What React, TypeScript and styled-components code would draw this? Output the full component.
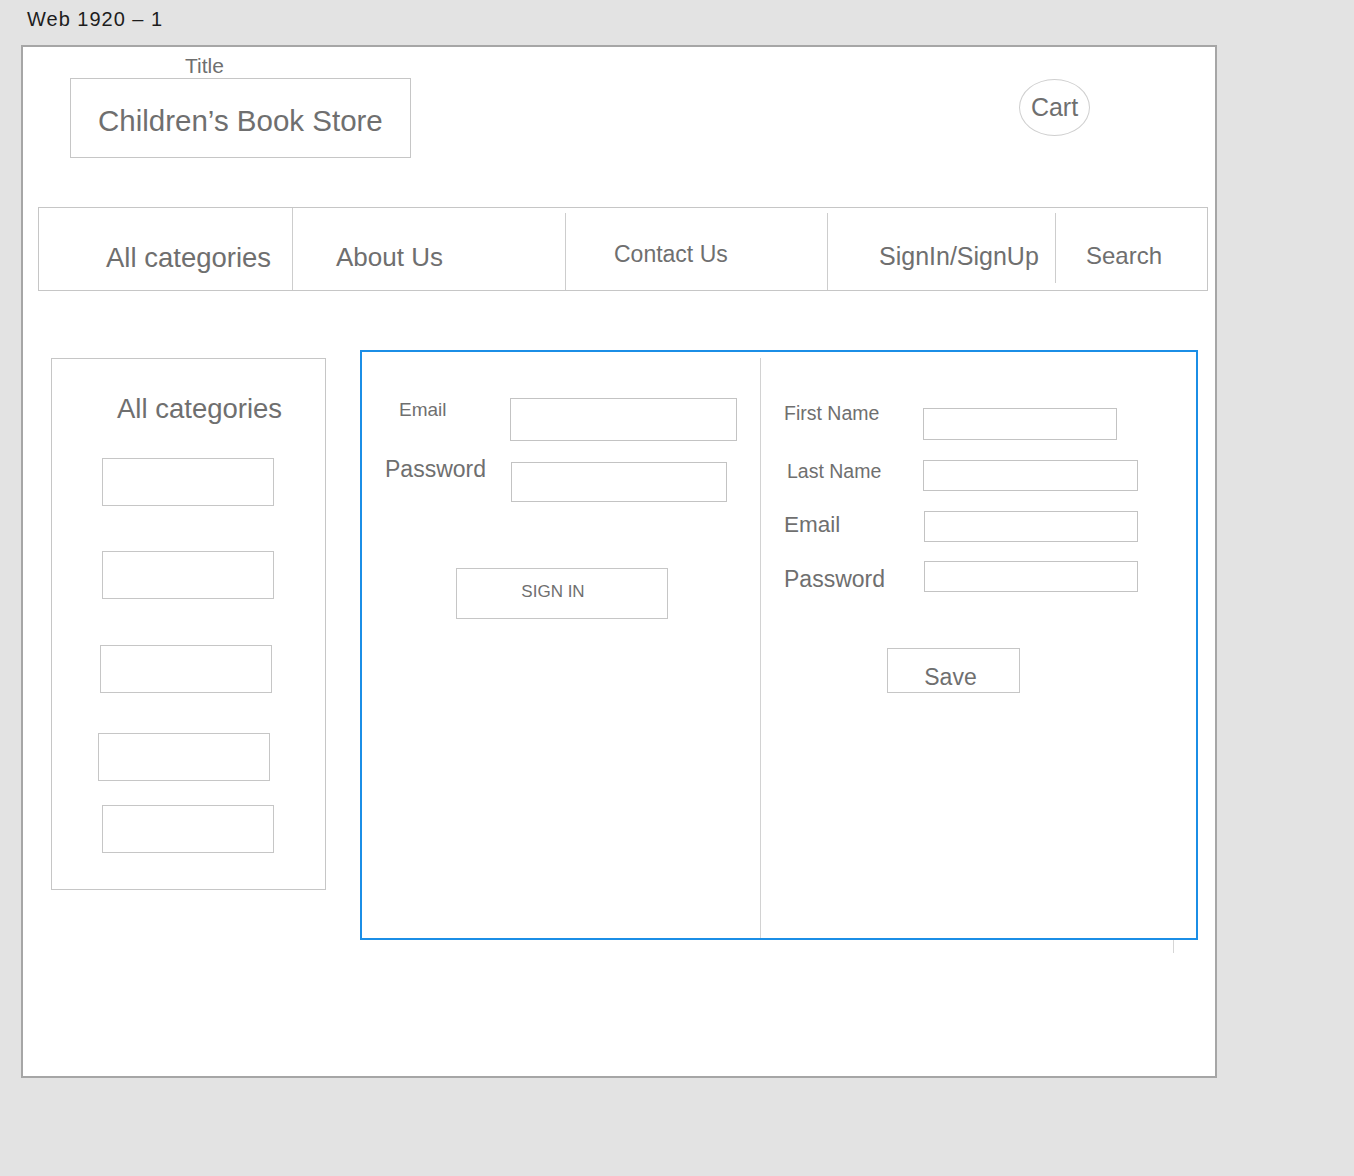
import React from 'react'
import styled, { createGlobalStyle } from 'styled-components'

const TEXT = '#6f6f6f'
const LINE = '#c6c6c6'
const BLUE = '#1b8ee6'

const GlobalStyle = createGlobalStyle`
  body {
    margin: 0;
    background: #e3e3e3;
    font-family: 'Liberation Sans', Arial, sans-serif;
  }
`

const Page = styled.div`
  width: 1354px;
  min-height: 1176px;
`

const Caption = styled.div`
  box-sizing: border-box;
  height: 45px;
  padding: 9px 0 0 27px;
  font-size: 20px;
  line-height: 1;
  letter-spacing: 1px;
  color: #1d1d1d;
`

const Artboard = styled.div`
  box-sizing: border-box;
  margin-left: 21px;
  width: 1196px;
  height: 1033px;
  border: 2px solid #a6a6a6;
  background: #fff;
`

const Header = styled.header`
  display: flex;
  align-items: flex-start;
  padding: 8px 0 0 47px;
`

const TitleGroup = styled.div`
  display: flex;
  flex-direction: column;
  align-items: flex-start;
`

const TitleLabel = styled.span`
  margin: 0 0 2px 115px;
  font-size: 21px;
  line-height: 1;
  color: ${TEXT};
`

const TitleBox = styled.div`
  box-sizing: border-box;
  width: 341px;
  height: 80px;
  padding: 27px 0 0 27px;
  border: 1px solid ${LINE};
`

const TitleText = styled.h1`
  margin: 0;
  font-size: 29.5px;
  font-weight: 400;
  line-height: 1;
  color: ${TEXT};
  white-space: nowrap;
`

const CartBubble = styled.button`
  box-sizing: border-box;
  width: 71px;
  height: 57px;
  margin: 24px 0 0 608px;
  padding: 0;
  border: 1px solid #cfcfcf;
  border-radius: 50%;
  background: #fff;
  display: flex;
  align-items: center;
  justify-content: center;
  font-family: inherit;
  font-size: 25px;
  line-height: 1;
  color: ${TEXT};
  cursor: pointer;
`

const NavBar = styled.nav`
  display: flex;
  box-sizing: border-box;
  width: 1170px;
  height: 84px;
  margin: 49px 0 0 15px;
  border: 1px solid ${LINE};
`

const NavCell = styled.a<{ $w?: number; $pl: number; $pt: number; $size: number }>`
  flex: ${({ $w }) => ($w ? `0 0 ${$w}px` : '1 1 auto')};
  box-sizing: border-box;
  padding: ${({ $pt, $pl }) => `${$pt}px 0 0 ${$pl}px`};
  font-size: ${({ $size }) => $size}px;
  line-height: 1;
  color: ${TEXT};
  white-space: nowrap;
  cursor: pointer;
`

const NavDivider = styled.span<{ $top: number; $bottom: number }>`
  flex: 0 0 1px;
  margin: ${({ $top, $bottom }) => `${$top}px 0 ${$bottom}px`};
  background: #cdcdcd;
`

const ContentRow = styled.div`
  display: flex;
  align-items: flex-start;
  margin-top: 59px;
`

const Sidebar = styled.aside`
  box-sizing: border-box;
  width: 275px;
  height: 532px;
  margin: 8px 0 0 28px;
  padding-top: 36px;
  border: 1px solid ${LINE};
  display: flex;
  flex-direction: column;
  align-items: flex-start;
`

const SidebarTitle = styled.h2`
  margin: 0 0 0 65px;
  font-size: 27.5px;
  font-weight: 400;
  line-height: 1;
  color: ${TEXT};
  white-space: nowrap;
`

const CategorySlot = styled.div<{ $mt: number; $ml: number }>`
  box-sizing: border-box;
  width: 172px;
  height: 48px;
  margin: ${({ $mt, $ml }) => `${$mt}px 0 0 ${$ml}px`};
  border: 1px solid ${LINE};
`

const PanelWrap = styled.div`
  display: flex;
  flex-direction: column;
  margin-left: 34px;
`

const Panel = styled.section`
  box-sizing: border-box;
  width: 838px;
  height: 590px;
  border: 2px solid ${BLUE};
  display: flex;
`

const FormColumn = styled.div<{ $w?: number; $pt: number }>`
  flex: ${({ $w }) => ($w ? `0 0 ${$w}px` : '1 1 auto')};
  box-sizing: border-box;
  padding-top: ${({ $pt }) => $pt}px;
  display: flex;
  flex-direction: column;
  align-items: flex-start;
`

const ColumnDivider = styled.div`
  flex: 0 0 1px;
  margin-top: 6px;
  background: #d2d2d2;
`

const PanelTick = styled.div`
  width: 1px;
  height: 13px;
  margin-left: 813px;
  background: #d6d6d6;
`

const FieldRow = styled.div<{ $mt: number }>`
  display: flex;
  align-items: flex-start;
  margin-top: ${({ $mt }) => $mt}px;
`

const FieldLabel = styled.label<{ $indent: number; $w: number; $offset: number; $size: number }>`
  flex: 0 0 auto;
  box-sizing: border-box;
  width: ${({ $indent, $w }) => $indent + $w}px;
  padding-left: ${({ $indent }) => $indent}px;
  margin-top: ${({ $offset }) => $offset}px;
  font-size: ${({ $size }) => $size}px;
  line-height: 1;
  color: ${TEXT};
  white-space: nowrap;
`

const FieldInput = styled.input<{ $w: number; $h: number }>`
  box-sizing: border-box;
  width: ${({ $w }) => $w}px;
  height: ${({ $h }) => $h}px;
  margin: 0;
  padding: 0 8px;
  border: 1px solid #c3c3c3;
  border-radius: 0;
  background: #fff;
  outline: none;
  font-family: inherit;
  font-size: 16px;
  color: ${TEXT};
`

const OutlineButton = styled.button<{
  $w: number
  $h: number
  $mt: number
  $ml: number
  $size: number
  $pad: string
}>`
  box-sizing: border-box;
  width: ${({ $w }) => $w}px;
  height: ${({ $h }) => $h}px;
  margin: ${({ $mt, $ml }) => `${$mt}px 0 0 ${$ml}px`};
  padding: ${({ $pad }) => $pad};
  border: 1px solid ${LINE};
  border-radius: 0;
  background: #fff;
  display: flex;
  align-items: center;
  justify-content: center;
  font-family: inherit;
  font-size: ${({ $size }) => $size}px;
  line-height: 1;
  color: ${TEXT};
  cursor: pointer;
`

type NavItem = { label: string; w?: number; pl: number; pt: number; size: number }

const navItems: NavItem[] = [
  { label: 'All categories', w: 253, pl: 67, pt: 36, size: 27.5 },
  { label: 'About Us', w: 272, pl: 43, pt: 36, size: 26 },
  { label: 'Contact Us', w: 261, pl: 48, pt: 35, size: 23 },
  { label: 'SignIn/SignUp', w: 227, pl: 51, pt: 36, size: 25 },
  { label: 'Search', pl: 30, pt: 36, size: 24 },
]

const navDividers = [
  { top: 0, bottom: 0 },
  { top: 5, bottom: 0 },
  { top: 5, bottom: 0 },
  { top: 5, bottom: 7 },
]

const categorySlots = [
  { mt: 35, ml: 50 },
  { mt: 45, ml: 50 },
  { mt: 46, ml: 48 },
  { mt: 40, ml: 46 },
  { mt: 24, ml: 50 },
]

type Field = {
  label: string
  type: string
  mt: number
  indent: number
  w: number
  offset: number
  size: number
  inputW: number
  inputH: number
}

const signInFields: Field[] = [
  { label: 'Email', type: 'email', mt: 0, indent: 37, w: 111, offset: 2, size: 19, inputW: 227, inputH: 43 },
  { label: 'Password', type: 'password', mt: 21, indent: 23, w: 126, offset: -4, size: 23, inputW: 216, inputH: 40 },
]

const signUpFields: Field[] = [
  { label: 'First Name', type: 'text', mt: 0, indent: 23, w: 139, offset: -4, size: 19.5, inputW: 194, inputH: 32 },
  { label: 'Last Name', type: 'text', mt: 20, indent: 26, w: 136, offset: 2, size: 19.5, inputW: 215, inputH: 31 },
  { label: 'Email', type: 'email', mt: 20, indent: 23, w: 140, offset: 3, size: 22.5, inputW: 214, inputH: 31 },
  { label: 'Password', type: 'password', mt: 19, indent: 23, w: 140, offset: 7, size: 23, inputW: 214, inputH: 31 },
]

function FieldList({ fields, prefix }: { fields: Field[]; prefix: string }) {
  return (
    <>
      {fields.map((f) => {
        const id = `${prefix}-${f.label.replace(/\s/g, '').toLowerCase()}`
        return (
          <FieldRow key={id} $mt={f.mt}>
            <FieldLabel htmlFor={id} $indent={f.indent} $w={f.w} $offset={f.offset} $size={f.size}>
              {f.label}
            </FieldLabel>
            <FieldInput id={id} type={f.type} $w={f.inputW} $h={f.inputH} />
          </FieldRow>
        )
      })}
    </>
  )
}

export default function App() {
  return (
    <Page>
      <GlobalStyle />
      <Caption>Web 1920 – 1</Caption>
      <Artboard>
        <Header>
          <TitleGroup>
            <TitleLabel>Title</TitleLabel>
            <TitleBox>
              <TitleText>Children’s Book Store</TitleText>
            </TitleBox>
          </TitleGroup>
          <CartBubble>Cart</CartBubble>
        </Header>

        <NavBar>
          {navItems.map((item, i) => (
            <React.Fragment key={item.label}>
              <NavCell $w={item.w} $pl={item.pl} $pt={item.pt} $size={item.size}>
                {item.label}
              </NavCell>
              {navDividers[i] && <NavDivider $top={navDividers[i].top} $bottom={navDividers[i].bottom} />}
            </React.Fragment>
          ))}
        </NavBar>

        <ContentRow>
          <Sidebar>
            <SidebarTitle>All categories</SidebarTitle>
            {categorySlots.map((s, i) => (
              <CategorySlot key={i} $mt={s.mt} $ml={s.ml} />
            ))}
          </Sidebar>

          <PanelWrap>
            <Panel>
              <FormColumn $w={398} $pt={46}>
                <FieldList fields={signInFields} prefix="signin" />
                <OutlineButton $w={212} $h={51} $mt={66} $ml={94} $size={17} $pad="0 18px 4px 0">
                  SIGN IN
                </OutlineButton>
              </FormColumn>
              <ColumnDivider />
              <FormColumn $pt={56}>
                <FieldList fields={signUpFields} prefix="signup" />
                <OutlineButton $w={133} $h={45} $mt={56} $ml={126} $size={23} $pad="13px 6px 0 0">
                  Save
                </OutlineButton>
              </FormColumn>
            </Panel>
            <PanelTick />
          </PanelWrap>
        </ContentRow>
      </Artboard>
    </Page>
  )
}
